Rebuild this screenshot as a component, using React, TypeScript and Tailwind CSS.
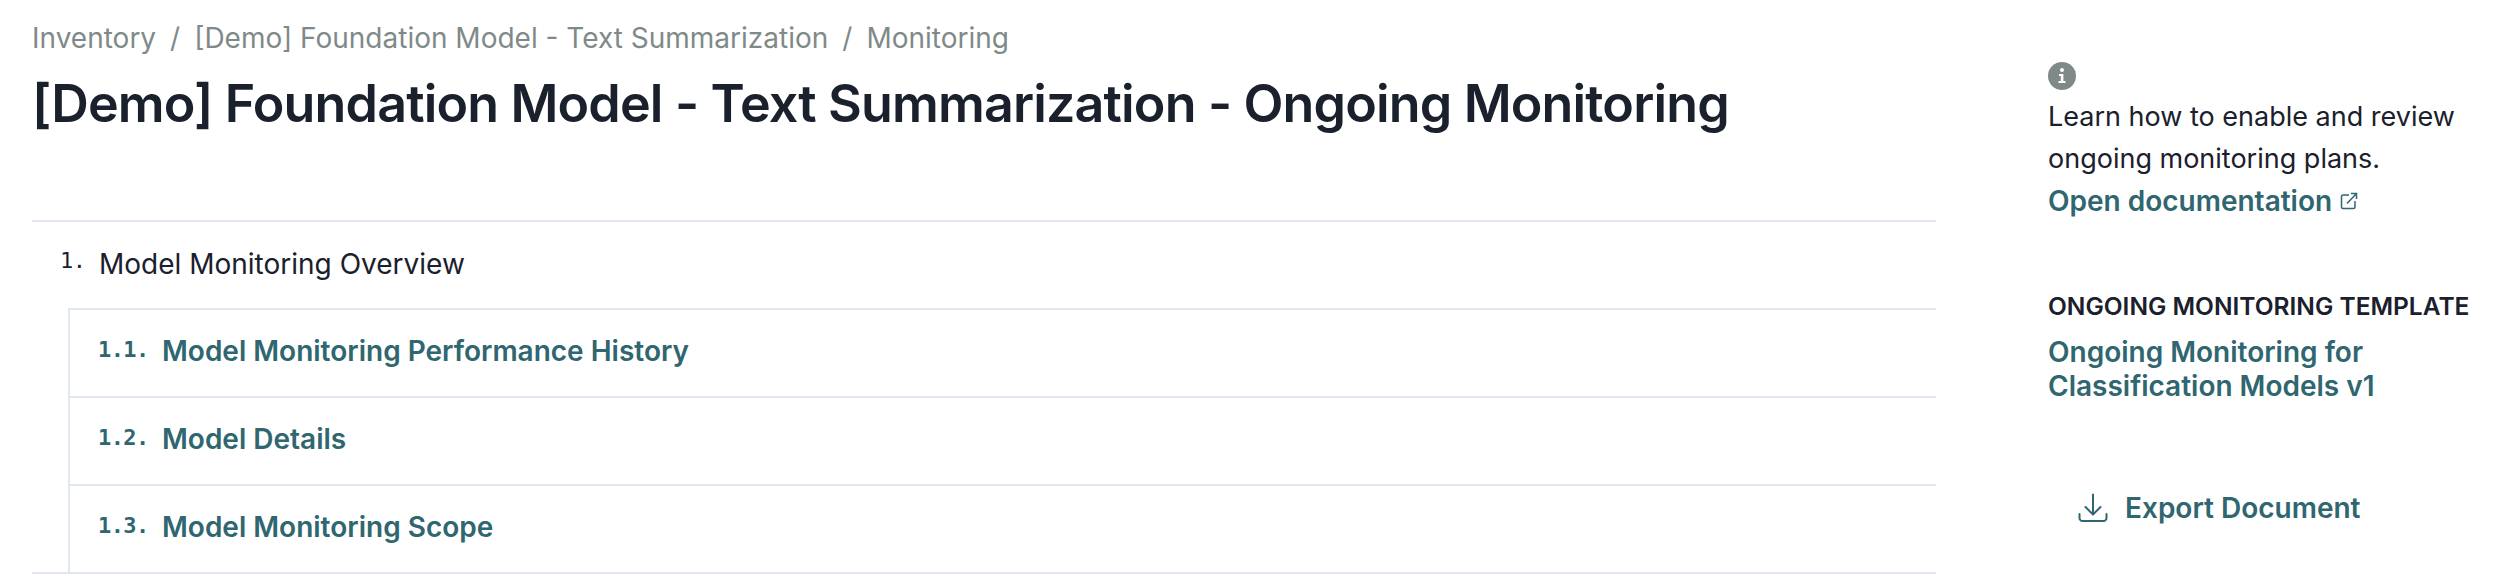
const sections = [
  { num: "1.1.", title: "Model Monitoring Performance History" },
  { num: "1.2.", title: "Model Details" },
  { num: "1.3.", title: "Model Monitoring Scope" },
];

const App = () => {
  return (
    <div className="flex h-[576px] w-[2514px] overflow-hidden bg-white font-['Inter',sans-serif] text-[#1a202c]">
      <main className="w-[1936px] shrink-0 pl-8">
        <nav className="flex h-[32px] mt-[22px] items-center gap-[14px] text-[28px] leading-[32px] text-[#7f8a88]">
          <span>Inventory</span>
          <span>/</span>
          <span>[Demo] Foundation Model - Text Summarization</span>
          <span>/</span>
          <span>Monitoring</span>
        </nav>
        <h1 className="mt-[14px] h-[152px] text-[52px] leading-[72px] font-semibold tracking-[-0.85px]">
          [Demo] Foundation Model - Text Summarization - Ongoing Monitoring
        </h1>

        <div className="border-t-2 border-b-2 border-[#e2e8f0]">
          <div className="flex h-[86px] items-center pb-[2px] pl-[28px]">
            <span className="w-[39px] font-['DejaVu_Sans_Mono',monospace] text-[22px] tracking-[-0.6px] -mt-[7px]">1.</span>
            <span className="text-[28px]">Model Monitoring Overview</span>
          </div>
          <ol className="ml-[36px] border-l-2 border-[#e2e8f0]">
            {sections.map((s) => (
              <li key={s.num} className="flex h-[88px] items-center border-t-2 border-[#e2e8f0] pb-[4px] pl-[28px] text-[#2f6670]">
                <span className="w-[64px] font-['DejaVu_Sans_Mono',monospace] text-[22px] tracking-[-0.6px] font-semibold -mt-[4px]">{s.num}</span>
                <span className="text-[28px] font-semibold">{s.title}</span>
              </li>
            ))}
          </ol>
        </div>
      </main>

      <aside className="ml-[112px] flex-1 pt-[62px]">
        <svg width="28" height="28" viewBox="0 0 28 28" className="block">
          <circle cx="14" cy="14" r="14" fill="#7f8a88" />
          <circle cx="14" cy="8" r="2" fill="#fff" />
          <path d="M11 12h4.400v7H17.500v2h-7v-2h2.300v-5H11z" fill="#fff" />
        </svg>
        <p className="mt-[6px] text-[27px] leading-[42px]">Learn how to enable and review ongoing monitoring plans.</p>
        <a className="flex items-center gap-[8px] text-[28px] leading-[42px] font-semibold text-[#2f6670]">
          Open documentation
          <svg width="18" height="18" viewBox="0 0 18 18" fill="none" stroke="currentColor" strokeWidth="1.500">
            <path d="M9 3H3a1.500 1.500 0 0 0-1.500 1.500v10.500A1.500 1.500 0 0 0 3 16.500h10.500a1.500 1.500 0 0 0 1.500-1.500V9" />
            <path d="M7 11.500 16.500 1.500M11 1.500h5.500V7" />
          </svg>
        </a>
        <h2 className="mt-[68px] text-[24.5px] leading-[32px] font-semibold">ONGOING MONITORING TEMPLATE</h2>
        <a className="mt-[13px] block text-[28px] leading-[34px] font-semibold text-[#2f6670]">
          Ongoing Monitoring for
          <br />
          Classification Models v1
        </a>
        <button className="mt-[84px] ml-[30px] flex items-center gap-[17px] text-[28px] font-semibold text-[#2f6670]">
          <svg width="30" height="30" viewBox="0 0 30 30" fill="none" stroke="currentColor" strokeWidth="2" strokeLinecap="round" strokeLinejoin="round">
            <path d="M15 1.500V21M7.500 14 15 21.500 22.500 14" />
            <path d="M1.500 21v4a3 3 0 0 0 3 3h21a3 3 0 0 0 3-3v-4" />
          </svg>
          Export Document
        </button>
      </aside>
    </div>
  );
};

export default App;
